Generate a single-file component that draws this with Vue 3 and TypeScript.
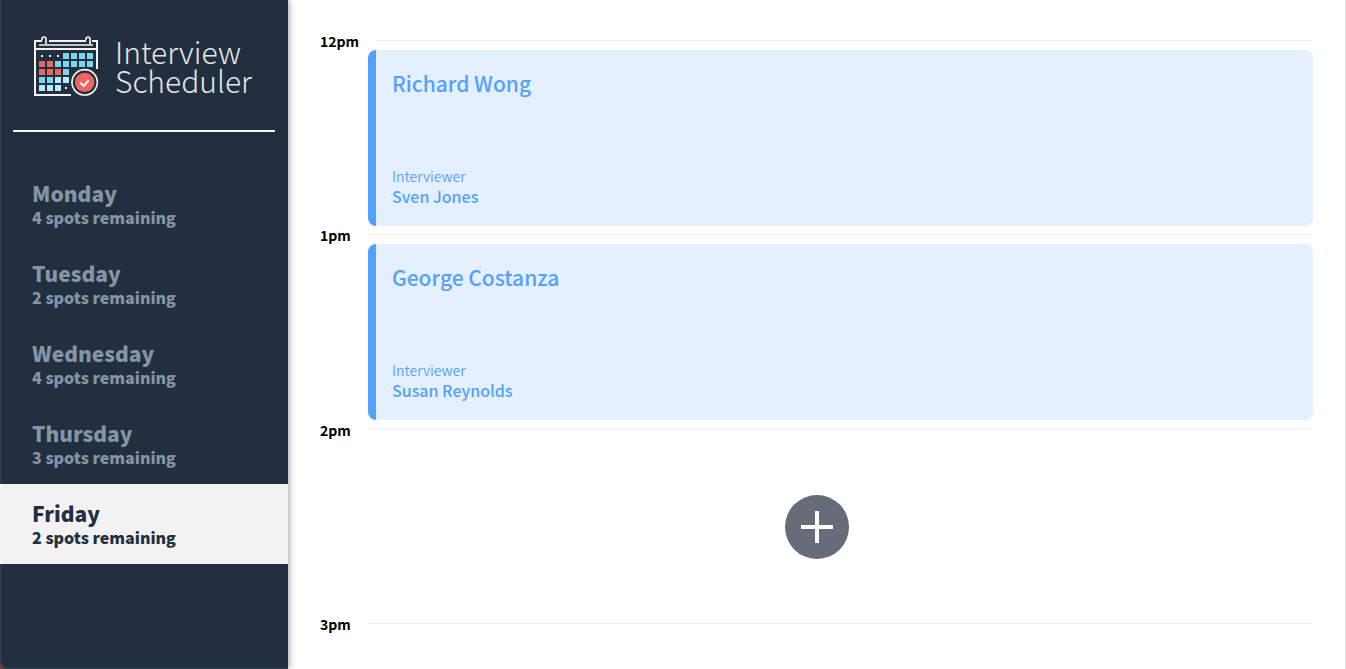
<script setup lang="ts">
import { ref } from 'vue'

interface Day {
  name: string
  spots: number
}

interface Slot {
  time: string
  student?: string
  interviewer?: string
}

const days: Day[] = [
  { name: 'Monday', spots: 4 },
  { name: 'Tuesday', spots: 2 },
  { name: 'Wednesday', spots: 4 },
  { name: 'Thursday', spots: 3 },
  { name: 'Friday', spots: 2 },
]

const slots: Slot[] = [
  { time: '12pm', student: 'Richard Wong', interviewer: 'Sven Jones' },
  { time: '1pm', student: 'George Costanza', interviewer: 'Susan Reynolds' },
  { time: '2pm' },
]

const selected = ref('Friday')

// Calendar cells: one string per week, one letter per day.
// b = blue, p = pale blue, r = red, d = dot, "-" = empty
const weeks = ['dddbbbb', 'rrbbbbb', 'rrrb---', 'bbpp---', 'pppd---']
const fills: Record<string, string> = { b: '#79d6ee', p: '#b5ecf7', r: '#ec6660', d: '#f4f4f4' }
const cells = weeks.flatMap((week, row) =>
  week.split('').flatMap((kind, col) => {
    if (kind === '-') return []
    const size = kind === 'd' ? 6 : 18
    const inset = (18 - size) / 2
    return [{ key: `${row}${col}`, x: 57 + col * 24 + inset, y: 84 + row * 24 + inset, size, fill: fills[kind] }]
  }),
)
</script>

<template>
  <div class="layout">
    <aside class="sidebar">
      <div class="brand">
        <svg class="brand-icon" viewBox="39 30 198 186" aria-hidden="true">
          <g fill="none" stroke="#f4f4f4" stroke-width="6">
            <path d="M153 210H45V48H66M87 48H198M216 48H231V132" />
            <path d="M45 72H231" />
            <path d="M57 60H219" stroke-width="5" />
            <path d="M78 58V42Q78 36 72 36Q66 36 66 42V46M210 58V42Q210 36 204 36Q198 36 198 42V46" stroke-width="5" />
          </g>
          <rect v-for="c in cells" :key="c.key" :x="c.x" :y="c.y" :width="c.size" :height="c.size" :fill="c.fill" />
          <circle cx="194" cy="172" r="38" fill="#222f3e" stroke="#f4f4f4" stroke-width="5" />
          <circle cx="194" cy="172" r="29" fill="#ec6660" />
          <path d="M181 173L191 183L206 166" fill="none" stroke="#f8f4f4" stroke-width="6" />
        </svg>
        <h1 class="brand-name">Interview<br />Scheduler</h1>
      </div>
      <hr class="divider" />
      <nav class="days" aria-label="Days">
        <button
          v-for="day in days"
          :key="day.name"
          type="button"
          class="day"
          :class="{ active: day.name === selected }"
          @click="selected = day.name"
        >
          <span class="day-name">{{ day.name }}</span>
          <span class="day-spots">{{ day.spots }} spots remaining</span>
        </button>
      </nav>
    </aside>

    <main class="schedule">
      <div class="slots">
        <section v-for="slot in slots" :key="slot.time" class="slot">
          <header class="slot-time">
            <h2>{{ slot.time }}</h2>
            <hr />
          </header>
          <article v-if="slot.student" class="card">
            <h3 class="student">{{ slot.student }}</h3>
            <div>
              <h4 class="label">Interviewer</h4>
              <p class="interviewer">{{ slot.interviewer }}</p>
            </div>
          </article>
          <div v-else class="empty">
            <button type="button" class="add" aria-label="Add appointment">
              <svg viewBox="0 0 64 64" aria-hidden="true">
                <path d="M32 16V48M16 32H48" stroke="#fff" stroke-width="4" />
              </svg>
            </button>
          </div>
        </section>
      </div>
      <header class="slot-time">
        <h2>3pm</h2>
        <hr />
      </header>
    </main>
  </div>
</template>

<style>
body {
  margin: 0;
  background: #fff;
}
</style>

<style scoped>
.layout {
  display: flex;
  height: 100vh;
  overflow: hidden;
  background: linear-gradient(to right, #77452c 16px, #fff 16px);
  font-family: 'Noto Sans CJK SC', 'Noto Sans', sans-serif;
  box-sizing: border-box;
  border-right: 1px solid #dedede;
}
h1, h2, h3, h4, p, hr {
  margin: 0;
  border: 0;
}
button {
  font: inherit;
  border: 0;
  padding: 0;
  cursor: pointer;
}
.sidebar {
  flex: 0 0 288px;
  background: #222f3e;
  border-radius: 0 0 0 8px;
  box-shadow: inset 1px -1px 0 #344352, 1px 0 6px rgba(34, 47, 62, 0.45);
}
.brand {
  display: flex;
  gap: 16px;
  padding: 35px 16px 0 33px;
  height: 95px;
}
.brand-icon {
  flex: none;
  width: 66px;
  height: 62px;
}
.brand-name {
  padding-top: 2px;
  font-size: 30px;
  line-height: 29px;
  font-weight: 200;
  color: #e4e6e8;
}
.divider {
  height: 2px;
  margin: 0 13px;
  background: #f6f6f6;
}
.days {
  padding-top: 32px;
}
.day {
  display: flex;
  flex-direction: column;
  justify-content: center;
  width: 100%;
  height: 80px;
  padding: 0 32px;
  text-align: left;
  font-weight: 900;
  color: #8395a7;
  background: transparent;
}
.day-name {
  font-size: 21px;
  line-height: 26px;
}
.day-spots {
  font-size: 16px;
  line-height: 22px;
}
.day.active {
  background: #f2f2f2;
  color: #222f3e;
}
.schedule {
  flex: 1;
  min-width: 0;
  padding: 32px 32px 0;
}
.slots {
  display: grid;
  grid-auto-rows: 1fr;
  min-height: 583px;
}
.slot {
  display: flex;
  flex-direction: column;
}
.slot-time {
  display: flex;
  align-items: center;
  gap: 16px;
  height: 18px;
}
.slot-time h2 {
  font-size: 14px;
  line-height: 18px;
  font-weight: 700;
  color: #000;
}
.slot-time hr {
  flex: 1;
  height: 1px;
  margin-bottom: 2px;
  background: #f0f0f0;
}
.card {
  display: flex;
  flex-direction: column;
  justify-content: space-between;
  box-sizing: border-box;
  height: 176px;
  margin-left: 48px;
  padding: 16px 16px 20px;
  border-left: 8px solid #54a0ff;
  border-radius: 8px;
  background: #e4f0ff;
  color: #54a0ff;
}
.student {
  font-size: 21px;
  line-height: 34px;
  font-weight: 500;
}
.label {
  font-size: 14px;
  line-height: 20px;
  font-weight: 350;
}
.interviewer {
  font-size: 16px;
  line-height: 20px;
  font-weight: 500;
}
.empty {
  flex: 1;
  display: flex;
  align-items: center;
  justify-content: center;
}
.add {
  width: 64px;
  height: 64px;
  border-radius: 50%;
  background: #666d78;
}
.add svg {
  display: block;
}
</style>
